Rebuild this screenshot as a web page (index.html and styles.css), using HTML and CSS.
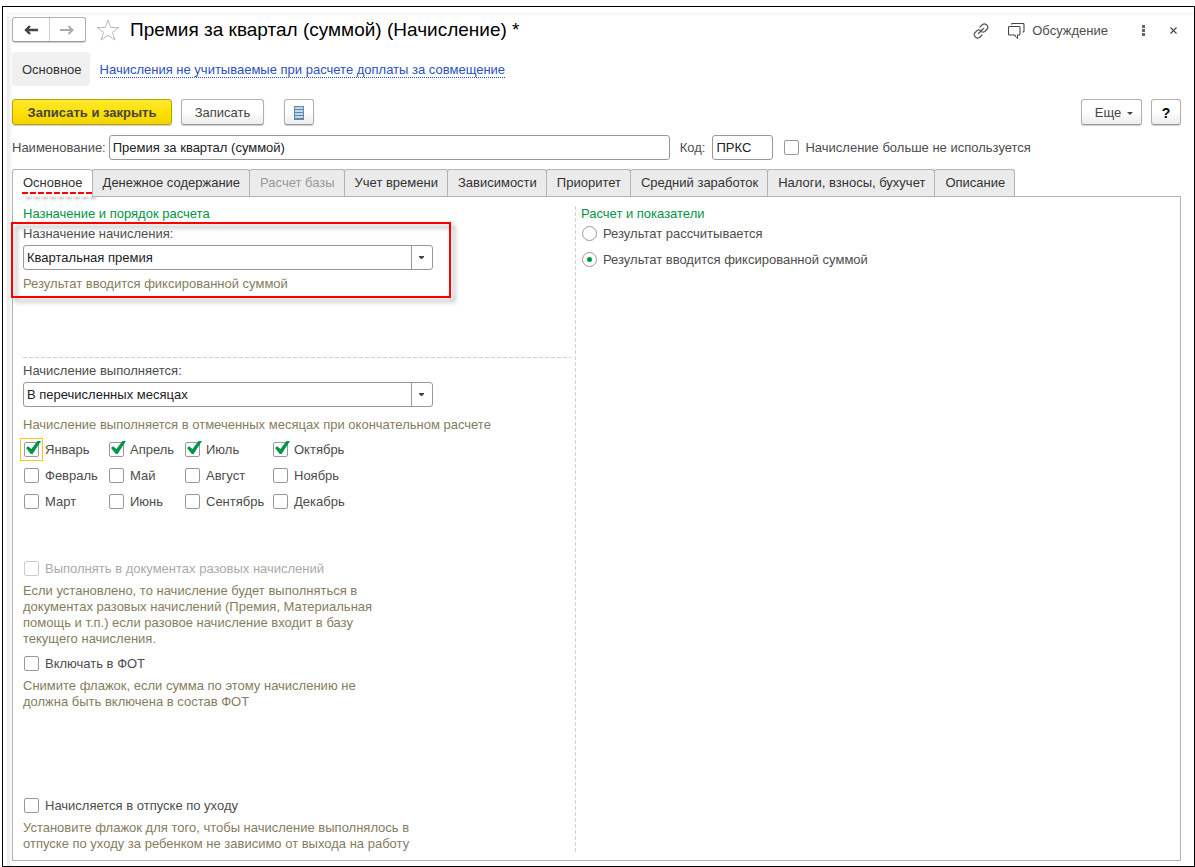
FILE: index.html
```html
<!DOCTYPE html>
<html lang="ru">
<head>
<meta charset="utf-8">
<title>Премия за квартал (суммой) (Начисление)</title>
<link rel="stylesheet" href="styles.css">
</head>
<body>
<div class="window">
<main class="form">
  <header class="titlebar">
    <div class="history">
      <button type="button" class="history-btn" aria-label="Назад"><svg width="14" height="10" viewBox="0 0 14 10"><path d="M14 5H3M6 1L2 5l4 4" fill="none" stroke="#444" stroke-width="2.4"/></svg></button>
      <button type="button" class="history-btn" aria-label="Вперед"><svg width="14" height="10" viewBox="0 0 14 10"><path d="M0 5h12M8.500 1l4 4-4 4" fill="none" stroke="#aaa" stroke-width="1.800"/></svg></button>
    </div>
    <button type="button" class="icon-btn" aria-label="В избранное"><svg width="24" height="22" viewBox="0 0 24 22"><path d="M12 1l2.800 7.500H23l-6.600 4.800 2.500 7.700-6.900-4.700L5.100 21l2.500-7.700L1 8.500h8.200z" fill="#fff" stroke="#b4bac0"/></svg></button>
    <h1 class="title">Премия за квартал (суммой) (Начисление) *</h1>
    <div class="tools">
      <button type="button" class="icon-btn" aria-label="Ссылка"><svg width="16" height="16" viewBox="0 0 16 16"><g fill="none" stroke="#555" stroke-width="1.200" stroke-linecap="round"><path d="M7 4l2.500-2.500q2-1.500 4 .3 2.300 2.200.8 4.200L11.800 8.500q-1.600 1.200-3.300.3M9 12l-2.500 2.500q-2 1.500-4-.3-2.300-2.200-.8-4.200L4.200 7.500q1.600-1.200 3.300-.3M5.500 10.500l5-5"/></g></svg></button>
      <button type="button" class="icon-btn discuss"><svg width="17" height="16" viewBox="0 0 17 16"><path d="M1.500 3.500h9.500q1 0 1 1V11q0 1-1 1H9.500v3L6.500 12h-5q-1 0-1-1V4.500q0-1 1-1zM3.500 1.500q0-1 1-1h10.500q1 0 1 1V8q0 1-1 1h-.5" fill="none" stroke="#444" stroke-width="1.100"/></svg>Обсуждение</button>
      <button type="button" class="icon-btn more" aria-label="Меню"><svg width="3" height="11" viewBox="0 0 3 11"><path d="M0 0h3v3H0zM0 4h3v3H0zM0 8h3v3H0z" fill="#666"/></svg></button>
      <button type="button" class="icon-btn" aria-label="Закрыть"><svg width="7" height="7" viewBox="0 0 7 7"><path d="M.5.5l6 6M6.500.5l-6 6" stroke="#444" stroke-width="1.100"/></svg></button>
    </div>
  </header>

  <nav class="sections">
    <span class="section-current">Основное</span>
    <a class="section-link" href="#">Начисления не учитываемые при расчете доплаты за совмещение</a>
  </nav>

  <div class="commands">
    <button type="button" class="btn btn-primary">Записать и закрыть</button>
    <button type="button" class="btn btn-save">Записать</button>
    <button type="button" class="btn btn-list" aria-label="Список"><svg width="10" height="14" viewBox="0 0 10 14"><path d="M0 0h10v14H0z" fill="#6787a4"/><path d="M1 2h8M1 5h8M1 8h8M1 11h8" stroke="#bcd6ea" stroke-width="2"/></svg></button>
    <button type="button" class="btn btn-more">Еще<svg width="6" height="3" viewBox="0 0 6 3"><path d="M0 0h6L3 3z" fill="#444"/></svg></button>
    <button type="button" class="btn btn-help">?</button>
  </div>

  <div class="fields">
    <label for="name">Наименование:</label>
    <input class="input input-name" id="name" type="text" value="Премия за квартал (суммой)">
    <label class="code-label" for="code">Код:</label>
    <input class="input input-code" id="code" type="text" value="ПРКС">
    <label class="check unused"><input type="checkbox">Начисление больше не используется</label>
  </div>

  <div class="tabs" role="tablist">
    <button type="button" class="tab tab-active" role="tab" aria-selected="true">Основное<span class="underline-mark"></span></button>
    <button type="button" class="tab" role="tab">Денежное содержание</button>
    <button type="button" class="tab" role="tab" disabled>Расчет базы</button>
    <button type="button" class="tab" role="tab">Учет времени</button>
    <button type="button" class="tab" role="tab">Зависимости</button>
    <button type="button" class="tab" role="tab">Приоритет</button>
    <button type="button" class="tab" role="tab">Средний заработок</button>
    <button type="button" class="tab" role="tab">Налоги, взносы, бухучет</button>
    <button type="button" class="tab" role="tab">Описание</button>
  </div>

  <div class="panel" role="tabpanel">
    <div class="left">
      <section class="purpose">
        <h2 class="group-title">Назначение и порядок расчета</h2>
        <div class="highlighted">
          <label class="field-label" for="purpose">Назначение начисления:</label>
          <div class="combo">
            <select id="purpose"><option>Квартальная премия</option></select>
            <svg class="combo-arrow" width="5" height="3" viewBox="0 0 5 3"><path d="M0 0h5v1L3 3H2L0 1z" fill="#444"/></svg>
          </div>
          <p class="hint">Результат вводится фиксированной суммой</p>
          <span class="frame-mark"></span>
        </div>
      </section>
      <section class="schedule">
        <label class="field-label" for="when">Начисление выполняется:</label>
        <div class="combo">
          <select id="when"><option>В перечисленных месяцах</option></select>
          <svg class="combo-arrow" width="5" height="3" viewBox="0 0 5 3"><path d="M0 0h5v1L3 3H2L0 1z" fill="#444"/></svg>
        </div>
        <p class="hint schedule-hint">Начисление выполняется в отмеченных месяцах при окончательном расчете</p>
        <div class="months">
          <label class="check current"><input type="checkbox" checked>Январь</label>
          <label class="check"><input type="checkbox">Февраль</label>
          <label class="check"><input type="checkbox">Март</label>
          <label class="check"><input type="checkbox" checked>Апрель</label>
          <label class="check"><input type="checkbox">Май</label>
          <label class="check"><input type="checkbox">Июнь</label>
          <label class="check"><input type="checkbox" checked>Июль</label>
          <label class="check"><input type="checkbox">Август</label>
          <label class="check"><input type="checkbox">Сентябрь</label>
          <label class="check"><input type="checkbox" checked>Октябрь</label>
          <label class="check"><input type="checkbox">Ноябрь</label>
          <label class="check"><input type="checkbox">Декабрь</label>
        </div>
      </section>
      <section class="options">
        <div class="option">
          <label class="check check-disabled"><input type="checkbox" disabled>Выполнять в документах разовых начислений</label>
          <p class="hint hint-narrow">Если установлено, то начисление будет выполняться в документах разовых начислений (Премия, Материальная помощь и т.п.) если разовое начисление входит в базу текущего начисления.</p>
        </div>
        <div class="option">
          <label class="check"><input type="checkbox">Включать в ФОТ</label>
          <p class="hint hint-narrow">Снимите флажок, если сумма по этому начислению не должна быть включена в состав ФОТ</p>
        </div>
      </section>
      <section class="option leave">
        <label class="check"><input type="checkbox">Начисляется в отпуске по уходу</label>
        <p class="hint hint-wide">Установите флажок для того, чтобы начисление выполнялось в отпуске по уходу за ребенком не зависимо от выхода на работу</p>
      </section>
    </div>
    <section class="right">
      <h2 class="group-title">Расчет и показатели</h2>
      <label class="check"><input type="radio" name="result">Результат рассчитывается</label>
      <label class="check"><input type="radio" name="result" checked>Результат вводится фиксированной суммой</label>
    </section>
  </div>
</main>
</div>
</body>
</html>
```

FILE: styles.css
```css
* { box-sizing: border-box; }

body {
  margin: 0;
  padding: 6px 0 0 2px;
  background: #fff;
  color: #4d4d4d;
  font: 13px/16px "Liberation Sans", Arial, sans-serif;
}

button, input, select { font: inherit; color: inherit; margin: 0; }
h1, h2, p { margin: 0; font-weight: normal; }
svg { display: block; flex: none; }

.window {
  display: flex;
  min-height: calc(100vh - 6px);
  padding: 6px 0 0 4px;
  border: 1px solid #000;
}

.form {
  flex: 1;
  min-width: 0;
  display: flex;
  flex-direction: column;
  padding: 4px 13px 5px 5px;
  background:
    linear-gradient(#f1f1f1, #fff) top / 100% 3px no-repeat,
    linear-gradient(90deg, #e9e9e9, #fff) left / 6px 100% no-repeat;
}

.titlebar { display: flex; align-items: center; height: 25px; }

.history {
  display: flex;
  width: 74px;
  height: 25px;
  border: 1px solid #b0b0b0;
  border-bottom-color: #999;
  border-radius: 3px;
  box-shadow: 0 1px 1px #ccc;
}

.history-btn {
  flex: 1;
  display: flex;
  align-items: center;
  justify-content: center;
  padding: 0;
  border: 0;
  background: none;
}
.history-btn + .history-btn { border-left: 1px solid #ccc; }

.icon-btn { display: flex; align-items: center; padding: 0; border: 0; background: none; }
.history + .icon-btn { margin-left: 10px; }

.title { margin-left: 10px; color: #000; font-size: 19px; line-height: 24px; }

.tools { display: flex; align-items: center; margin: 2px 4px 0 auto; }
.discuss { gap: 7px; margin-left: 19px; }
.more { margin: 0 25px 0 34px; }

.sections { display: flex; align-items: center; height: 34px; margin-top: 10px; }
.section-current { padding: 10px 8px 8px 10px; border-radius: 4px; background: #f0f0f0; color: #333; }
.section-link {
  margin: 2px 0 0 10px;
  border-bottom: 1px dotted #2a52be;
  color: #2a52be;
  line-height: 14px;
  text-decoration: none;
}

.commands { display: flex; height: 27px; margin-top: 13px; }
.btn {
  display: flex;
  align-items: center;
  justify-content: center;
  height: 26px;
  padding: 2px 0 0;
  border: 1px solid #b0b0b0;
  border-bottom-color: #999;
  border-radius: 3px;
  background: linear-gradient(#fff 50%, #ececec);
  box-shadow: 0 1px 1px #ccc;
  color: #444;
}
.btn-primary {
  width: 160px;
  border-color: #b8a200;
  background: linear-gradient(#ffe935, #ffe100 50%, #f2d400);
  font-weight: bold;
}
.btn-save { width: 83px; margin-left: 9px; }
.btn-list { width: 30px; margin-left: 20px; }
.btn-more { width: 61px; margin-left: auto; gap: 6px; padding-left: 5px; }
.btn-help { width: 30px; margin-left: 9px; color: #000; font-size: 14px; font-weight: bold; }

.fields { display: flex; align-items: center; margin-top: 9px; }
.input {
  height: 25px;
  padding: 0 3px;
  border: 1px solid #999;
  border-radius: 3px;
  background: #fff;
  color: #222;
}
.input-name { width: 561px; margin-left: 3px; }
.code-label { margin-left: 10px; }
.input-code { width: 61px; margin-left: 7px; }
.unused { margin-left: 11px; }

.check { display: flex; align-items: flex-start; gap: 6px; height: 16px; white-space: nowrap; }
.check input {
  appearance: none;
  position: relative;
  flex: none;
  width: 15px;
  height: 15px;
  border: 1px solid #999;
  border-radius: 2px;
  background: #fff;
}
.check input[type="checkbox"]:checked::before {
  content: "";
  position: absolute;
  left: 1px;
  top: -2px;
  width: 15px;
  height: 13px;
  background: #009646;
  clip-path: polygon(0 54%, 14% 40%, 36% 62%, 76% 0, 100% 0, 44% 100%, 32% 100%);
}
.check input[type="radio"] { border-radius: 50%; }
.check input[type="radio"]:checked::before {
  content: "";
  position: absolute;
  left: 4px;
  top: 4px;
  width: 5px;
  height: 5px;
  border-radius: 50%;
  background: #009646;
}
.current input::after {
  content: "";
  position: absolute;
  inset: -5px;
  border: 1px solid #f5c81e;
}
.check-disabled { color: #aaa; }
.check-disabled input { border-color: #ccc; }

.tabs { display: flex; margin-top: 9px; }
.tab {
  height: 27px;
  padding: 0 9px 0 10px;
  border: 1px solid #b3b3b3;
  border-bottom: 0;
  border-radius: 3px 3px 0 0;
  background: #ebebeb;
  color: #333;
  white-space: nowrap;
}
.tab + .tab { margin-left: -1px; }
.tab:disabled { color: #999; }
.tab-active { position: relative; height: 28px; margin-bottom: -1px; padding-bottom: 1px; background: #fff; }

/* Dashed underline drawn over the active tab */
.underline-mark {
  position: absolute;
  z-index: 1;
  left: 9px;
  right: 0;
  top: 22px;
  height: 2px;
  background: repeating-linear-gradient(90deg, #f00 0 6px, transparent 6px 8px);
  filter: drop-shadow(4px 5px 1px #bbb);
}

.panel {
  flex: 1;
  display: grid;
  grid-template-columns: minmax(0, 552fr) minmax(0, 605fr);
  padding: 9px 0 8px 10px;
  border: 1px solid #b3b3b3;
}
.left { display: flex; flex-direction: column; padding-right: 4px; }
.group-title { color: #009646; font-size: 13px; line-height: 16px; }

.purpose {
  height: 152px;
  background: repeating-linear-gradient(90deg, #d0d0d0 0 4px, transparent 4px 6px) bottom / 100% 1px no-repeat;
}
.highlighted { position: relative; width: 410px; padding-top: 4px; }
/* Red frame with a shadow round the purpose field */
.frame-mark {
  position: absolute;
  inset: 0 -18px -6px -12px;
  border: 2px solid #ff0000;
  filter: drop-shadow(4px 4px 2px #aaa);
  pointer-events: none;
}

.field-label { display: block; }
.combo { position: relative; width: 410px; height: 25px; margin-top: 3px; }
.combo select {
  appearance: none;
  width: 100%;
  height: 25px;
  padding: 0 24px 0 3px;
  border: 1px solid #999;
  border-radius: 3px;
  background: linear-gradient(#999, #999) right 20px top / 1px 100% no-repeat #fff;
  color: #222;
}
.combo-arrow { position: absolute; right: 9px; top: 11px; pointer-events: none; }

.hint { color: #857d60; }
.combo + .hint { margin-top: 6px; }
.schedule { padding-top: 5px; }
.combo + .schedule-hint { margin-top: 10px; }

.months {
  display: grid;
  grid-template: repeat(3, 16px) / 85px 76px 88px max-content;
  grid-auto-flow: column;
  row-gap: 10px;
  margin: 9px 0 0 1px;
}

.options { display: flex; flex-direction: column; gap: 9px; margin-top: 51px; }
.option .check { margin-left: 1px; }
.option .hint { margin-top: 6px; }
.hint-narrow { max-width: 360px; }
.hint-wide { max-width: 400px; }
.leave { margin-top: auto; }

.right {
  display: flex;
  flex-direction: column;
  align-items: flex-start;
  gap: 10px;
  padding-left: 6px;
  background: repeating-linear-gradient(#d0d0d0 0 4px, transparent 4px 6px) left / 1px 100% no-repeat;
}
.right .group-title { margin-bottom: -6px; }
.right .check { margin-left: 1px; }
```
